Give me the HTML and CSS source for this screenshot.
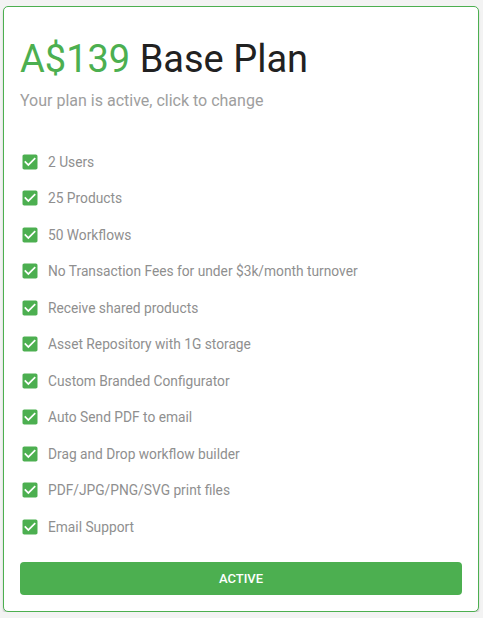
FILE: index.html
```html
<!DOCTYPE html>
<html lang="en">
<head>
    <meta charset="UTF-8">
    <meta name="viewport" content="width=device-width, initial-scale=1.0">
    <title>Base Plan</title>
    <link rel="stylesheet" href="styles.css">
</head>
<body>
    <div class="plan-card">
        <h1 class="plan-title"><span class="price">A$139</span> Base Plan</h1>
        <p class="plan-sub">Your plan is active, click to change</p>

        <ul class="features">
            <li><svg viewBox="0 0 24 24"><path d="M19 3H5c-1.11 0-2 .9-2 2v14c0 1.1.89 2 2 2h14c1.11 0 2-.9 2-2V5c0-1.1-.89-2-2-2zm-9 14l-5-5 1.41-1.41L10 14.170l7.59-7.59L19 8l-9 9z"/></svg>2 Users</li>
            <li><svg viewBox="0 0 24 24"><path d="M19 3H5c-1.11 0-2 .9-2 2v14c0 1.1.89 2 2 2h14c1.11 0 2-.9 2-2V5c0-1.1-.89-2-2-2zm-9 14l-5-5 1.41-1.41L10 14.17l7.59-7.59L19 8l-9 9z"/></svg>25 Products</li>
            <li><svg viewBox="0 0 24 24"><path d="M19 3H5c-1.11 0-2 .9-2 2v14c0 1.1.89 2 2 2h14c1.11 0 2-.9 2-2V5c0-1.1-.89-2-2-2zm-9 14l-5-5 1.41-1.41L10 14.17l7.59-7.59L19 8l-9 9z"/></svg>50 Workflows</li>
            <li><svg viewBox="0 0 24 24"><path d="M19 3H5c-1.11 0-2 .9-2 2v14c0 1.1.89 2 2 2h14c1.11 0 2-.9 2-2V5c0-1.1-.89-2-2-2zm-9 14l-5-5 1.41-1.41L10 14.17l7.59-7.59L19 8l-9 9z"/></svg>No Transaction Fees for under $3k/month turnover</li>
            <li><svg viewBox="0 0 24 24"><path d="M19 3H5c-1.11 0-2 .9-2 2v14c0 1.1.89 2 2 2h14c1.11 0 2-.9 2-2V5c0-1.1-.89-2-2-2zm-9 14l-5-5 1.41-1.41L10 14.17l7.59-7.59L19 8l-9 9z"/></svg>Receive shared products</li>
            <li><svg viewBox="0 0 24 24"><path d="M19 3H5c-1.11 0-2 .9-2 2v14c0 1.1.89 2 2 2h14c1.11 0 2-.9 2-2V5c0-1.1-.89-2-2-2zm-9 14l-5-5 1.41-1.41L10 14.17l7.59-7.59L19 8l-9 9z"/></svg>Asset Repository with 1G storage</li>
            <li><svg viewBox="0 0 24 24"><path d="M19 3H5c-1.11 0-2 .9-2 2v14c0 1.1.89 2 2 2h14c1.11 0 2-.9 2-2V5c0-1.1-.89-2-2-2zm-9 14l-5-5 1.41-1.41L10 14.17l7.59-7.59L19 8l-9 9z"/></svg>Custom Branded Configurator</li>
            <li><svg viewBox="0 0 24 24"><path d="M19 3H5c-1.11 0-2 .9-2 2v14c0 1.1.89 2 2 2h14c1.11 0 2-.9 2-2V5c0-1.1-.89-2-2-2zm-9 14l-5-5 1.41-1.41L10 14.17l7.59-7.59L19 8l-9 9z"/></svg>Auto Send PDF to email</li>
            <li><svg viewBox="0 0 24 24"><path d="M19 3H5c-1.11 0-2 .9-2 2v14c0 1.1.89 2 2 2h14c1.11 0 2-.9 2-2V5c0-1.1-.89-2-2-2zm-9 14l-5-5 1.41-1.41L10 14.17l7.59-7.59L19 8l-9 9z"/></svg>Drag and Drop workflow builder</li>
            <li><svg viewBox="0 0 24 24"><path d="M19 3H5c-1.11 0-2 .9-2 2v14c0 1.1.89 2 2 2h14c1.11 0 2-.9 2-2V5c0-1.1-.89-2-2-2zm-9 14l-5-5 1.41-1.41L10 14.17l7.59-7.59L19 8l-9 9z"/></svg>PDF/JPG/PNG/SVG print files</li>
            <li><svg viewBox="0 0 24 24"><path d="M19 3H5c-1.11 0-2 .9-2 2v14c0 1.1.89 2 2 2h14c1.11 0 2-.9 2-2V5c0-1.1-.89-2-2-2zm-9 14l-5-5 1.41-1.41L10 14.17l7.59-7.59L19 8l-9 9z"/></svg>Email Support</li>
        </ul>

        <button class="plan-btn">Active</button>
    </div>
</body>
</html>
```

FILE: styles.css
```css
* {
    margin: 0;
    padding: 0;
    box-sizing: border-box;
}

body {
    font-family: Roboto, 'Liberation Sans', sans-serif;
    background: #f3f3f3;
    padding: 6px 4px 0 3px;
}

.plan-card {
    background: #fff;
    border: 1px solid #4caf50;
    border-radius: 5px;
    box-shadow: 0 2px 2px rgba(0, 0, 0, 0.18);
    padding: 16px 16px 15px;
    height: 606px;
}

.plan-title {
    margin-top: 12px;
    font-size: 38px;
    line-height: 48px;
    font-weight: 400;
    color: #212121;
}

.price {
    color: #4caf50;
}

.plan-sub {
    margin-top: 6px;
    font-size: 16px;
    line-height: 24px;
    color: #9e9e9e;
}

.features {
    list-style: none;
    margin-top: 30.5px;
    display: grid;
    grid-auto-rows: 36.5px;
}

.features li {
    display: flex;
    align-items: center;
    gap: 8px;
    font-size: 13.75px;
    color: #8f8f8f;
}

.features svg {
    width: 20px;
    height: 20px;
    fill: #4caf50;
    flex: 0 0 auto;
}

.plan-btn {
    display: block;
    width: 100%;
    height: 33px;
    margin-top: 16.5px;
    border: none;
    border-radius: 4px;
    background: #4caf50;
    color: #fff;
    font-family: Roboto, 'Liberation Sans', sans-serif;
    font-size: 13px;
    font-weight: 500;
    text-transform: uppercase;
}
```
